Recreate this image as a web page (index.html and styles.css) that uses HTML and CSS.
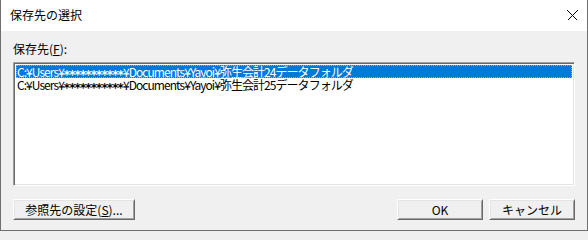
FILE: index.html
```html
<!DOCTYPE html>
<html lang="ja">
<head>
<meta charset="utf-8">
<link rel="stylesheet" href="styles.css">
</head>
<body>
<div class="window">
  <div class="titlebar">
    <span class="title">保存先の選択</span>
    <svg class="close" width="11" height="11" viewBox="0 0 11 11"><path d="M0.5 0.5 L10.5 10.5 M10.5 0.5 L0.5 10.5" stroke="#000" stroke-width="1" fill="none" shape-rendering="crispEdges"/></svg>
  </div>
  <div class="client">
    <div class="label">保存先(<u>F</u>):</div>
    <div class="listbox">
      <div class="row selected">C:¥Users¥<span class="mask">***********</span>¥Documents¥Yayoi¥弥生会計24データフォルダ</div>
      <div class="row">C:¥Users¥<span class="mask">***********</span>¥Documents¥Yayoi¥弥生会計25データフォルダ</div>
    </div>
    <div class="buttons">
      <button class="btn btn-ref">参照先の設定(<u>S</u>)...</button>
      <div class="spacer"></div>
      <button class="btn btn-ok">OK</button>
      <button class="btn btn-cancel">キャンセル</button>
    </div>
  </div>
</div>
</body>
</html>
```
FILE: styles.css
```css
html, body {
  margin: 0;
  padding: 0;
  background: #f0f0f0;
}
body {
  font-family: "Noto Sans CJK JP", "Liberation Sans", sans-serif;
  font-size: 12px;
  color: #000;
}
.window {
  width: 588px;
  height: 231px;
  box-sizing: border-box;
  border-left: 1px solid #6e6e6e;
  border-right: 1px solid #6e6e6e;
  border-bottom: 1px solid #6e6e6e;
  display: flex;
  flex-direction: column;
  background: #f0f0f0;
  overflow: hidden;
}
.titlebar {
  height: 31px;
  flex: none;
  background: #fff;
  display: flex;
  align-items: center;
  padding-left: 9px;
  padding-right: 9px;
  box-sizing: border-box;
}
.title {
  flex: 1;
  font-size: 12px;
  line-height: 14px;
  margin-top: -1px;
}
.close {
  display: block;
  margin-top: -1px;
}
.client {
  flex: 1;
  display: flex;
  flex-direction: column;
  padding: 11px 12px 10px 12px;
}
.label {
  line-height: 14px;
  height: 14px;
  margin-bottom: 6px;
}
.listbox {
  height: 124px;
  flex: none;
  box-sizing: border-box;
  background: #fff;
  border-style: solid;
  border-width: 1px;
  border-color: #a0a0a0 #fff #fff #a0a0a0;
  box-shadow: inset 1px 1px 0 #696969, inset -1px -1px 0 #e3e3e3;
  padding: 2px 2px;
}
.row {
  height: 13px;
  line-height: 13px;
  font-size: 12px;
  white-space: nowrap;
  padding-left: 1px;
  letter-spacing: -0.95px;
}
.row.selected {
  background: #0078d7;
  color: #fff;
  outline: 1px dotted #ff9a2a;
  outline-offset: -1px;
}
.mask {
  font-family: "DejaVu Sans", sans-serif;
  font-weight: bold;
  font-size: 12px;
  line-height: 10px;
  letter-spacing: -0.9px;
  position: relative;
  top: 2px;
}
.buttons {
  margin-top: 13px;
  display: flex;
  height: 21px;
  flex: none;
}
.spacer {
  flex: 1;
}
.btn {
  font-family: "Noto Sans CJK JP", "Liberation Sans", sans-serif;
  font-size: 12px;
  line-height: 14px;
  color: #000;
  height: 21px;
  padding: 0;
  margin: 0;
  background: #f0f0f0;
  border-style: solid;
  border-width: 1px;
  border-color: #fff #696969 #696969 #fff;
  box-shadow: inset 1px 1px 0 #e3e3e3, inset -1px -1px 0 #a0a0a0;
  box-sizing: border-box;
}
.btn-ref {
  width: 122px;
}
.btn-ok {
  width: 86px;
}
.btn-cancel {
  width: 86px;
  margin-left: 6px;
}
u {
  text-decoration: underline;
  text-underline-offset: 1px;
}
```
